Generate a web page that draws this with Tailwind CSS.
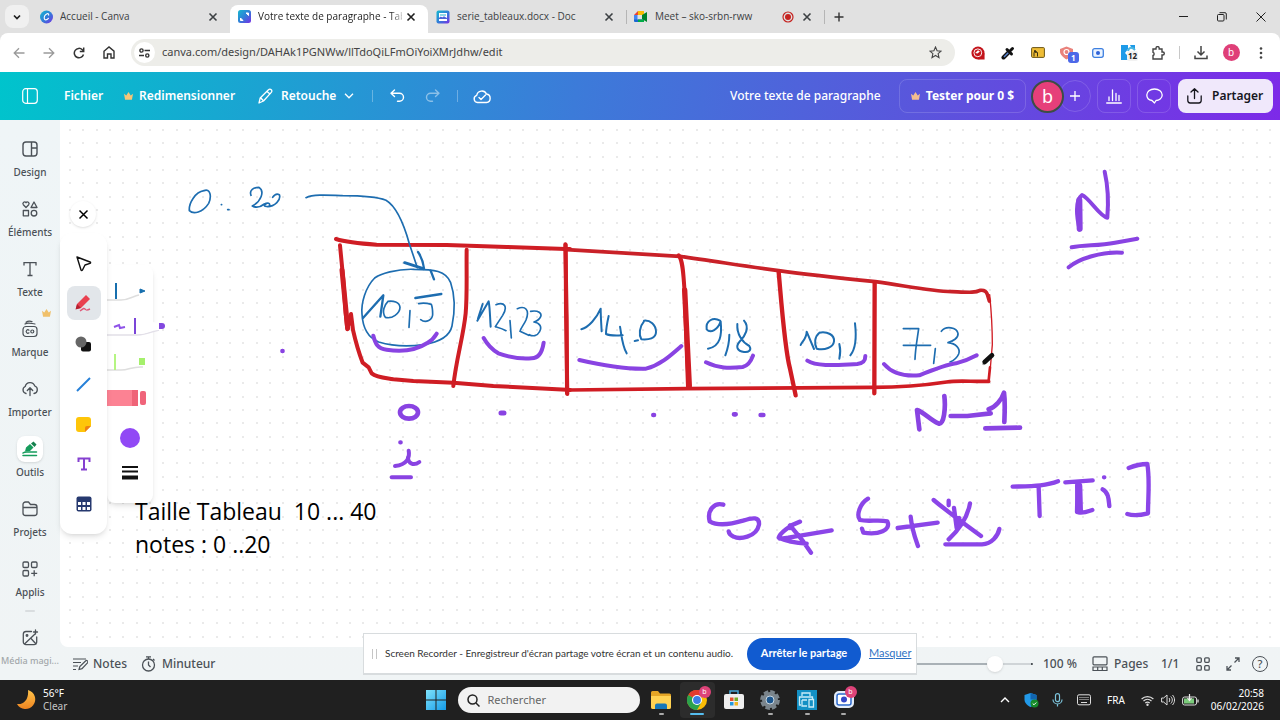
<!DOCTYPE html>
<html lang="fr">
<head>
<meta charset="utf-8">
<meta name="viewport" content="width=device-width, initial-scale=1">
<title>Votre texte de paragraphe - Tableau blanc</title>
<script src="https://cdn.jsdelivr.net/npm/@tailwindcss/browser@4"></script>
</head>
<body class="flex min-h-screen flex-col overflow-hidden bg-[#e1e1e1] font-['Noto_Sans',sans-serif] text-[#3c4043]">
<svg class="hidden" aria-hidden="true">
  <symbol id="x" viewBox="0 0 12 12"><path d="M2.500 2.500l7 7M9.500 2.500l-7 7" fill="none" stroke="currentColor" stroke-width="1.600"/></symbol>
  <symbol id="crown" viewBox="0 0 10 10"><path d="M0 2l2.500 2L5 0l2.500 4L10 2 8.800 8.500H1.200z" fill="currentColor"/></symbol>
</svg>

<!-- Tabs -->
<nav class="flex h-[33px] shrink-0 items-center pl-[5px] font-['Open_Sans',sans-serif] text-[10px]">
  <button aria-label="Rechercher dans les onglets" class="mr-[3px] flex h-[23px] w-6 items-center justify-center rounded-lg bg-[#f0f0f0] text-[#1f1f1f]"><svg width="8" height="8" viewBox="0 0 8 8"><path d="M1 2.500l3 3 3-3" fill="none" stroke="currentColor" stroke-width="1.700"/></svg></button>
  <div class="flex h-full w-[198px] items-center gap-[7px] px-2">
    <svg class="shrink-0" width="13" height="14" viewBox="0 0 13 14"><defs><linearGradient id="cv" x1="0" y1="0" x2="1" y2="1"><stop offset="0" stop-color="#16b9cf"/><stop offset=".5" stop-color="#2f7fd8"/><stop offset="1" stop-color="#7a2ee6"/></linearGradient></defs><circle cx="6.500" cy="7" r="6.500" fill="url(#cv)"/><path d="M8.700 5.200c.2-1.400-.9-1.900-2-1.300-1.700.9-2.700 3-2.400 4.700.3 1.700 2.300 1.900 4.100-.3" fill="none" stroke="#fff" stroke-width="1.100" stroke-linecap="round"/></svg>
    <span class="min-w-0 flex-1 truncate">Accueil - Canva</span>
    <button aria-label="Fermer" class="mr-[3px]"><svg width="12" height="12"><use href="#x"/></svg></button>
  </div>
  <div class="flex h-[28px] w-[198px] items-center gap-[7px] self-end rounded-t-lg bg-white px-2 pb-[5px] text-[#1f1f1f]">
    <svg class="shrink-0" width="13" height="13" viewBox="0 0 13 13"><rect width="13" height="13" rx="2.500" fill="url(#cv)"/><path d="M8 3h2.500v2.500zM5 10.500H2.500V8z" fill="#fff" stroke="#fff"/></svg>
    <span class="-mr-1 min-w-0 flex-1 whitespace-nowrap [mask-image:linear-gradient(to_right,#000_92%,#0004)]">Votre texte de paragraphe - Tab</span>
    <button aria-label="Fermer" class="mr-[3px]"><svg width="12" height="12"><use href="#x"/></svg></button>
  </div>
  <div class="flex h-full w-[198px] items-center gap-[7px] px-2">
    <svg class="shrink-0" width="14" height="14" viewBox="0 0 14 14"><rect x=".5" y=".5" width="13" height="13" rx="2" fill="url(#cv)"/><path d="M3 3h8v8H3z" fill="#fff"/><path d="M3 8c2-3 3 0 4-1s2 0 4 1v1H3z" fill="#4b62d9"/><path d="M4 5h6" stroke="#21b1d0"/></svg>
    <span class="min-w-0 flex-1 truncate">serie_tableaux.docx - Doc</span>
    <button aria-label="Fermer" class="mr-[3px]"><svg width="12" height="12"><use href="#x"/></svg></button>
  </div>
  <div class="relative flex h-full w-[198px] items-center gap-[7px] px-2 before:absolute before:left-0 before:h-[14px] before:w-px before:bg-[#b5b5b5]">
    <svg class="shrink-0" width="14" height="12" viewBox="0 0 14 12"><path d="M0 4l4-4v4z" fill="#ea4335"/><path d="M4 0h6v4H4z" fill="#fbbc04"/><path d="M0 4h3.500v5H0z" fill="#4285f4"/><path d="M0 8.500h10V11H1a1 1 0 01-1-1z" fill="#1967d2"/><path d="M4 8.500h6V11H4z" fill="#00ac47"/><path d="M8 4l5-3v10L8 8z" fill="#00832d"/></svg>
    <span class="min-w-0 flex-1 truncate">Meet – sko-srbn-rww</span>
    <svg class="shrink-0" width="12" height="12" viewBox="0 0 12 12"><circle cx="6" cy="6" r="5" fill="none" stroke="#c5221f" stroke-width="1.200"/><circle cx="6" cy="6" r="3" fill="#c5221f"/></svg>
    <button aria-label="Fermer" class="mr-[3px]"><svg width="12" height="12"><use href="#x"/></svg></button>
  </div>
  <span class="h-[14px] w-px bg-[#b5b5b5]"></span>
  <button aria-label="Nouvel onglet" class="ml-2"><svg width="12" height="12"><path d="M6 1.500v9M1.500 6h9" stroke="#333" stroke-width="1.400"/></svg></button>
  <div class="ml-auto flex text-[#222]">
    <button aria-label="Réduire" class="flex w-[38px] justify-center"><svg width="10" height="10"><path d="M0 4.500h9" stroke="currentColor"/></svg></button>
    <button aria-label="Restaurer" class="flex w-[38px] justify-center"><svg width="10" height="10" viewBox="0 0 10 10" fill="none" stroke="currentColor"><rect x=".5" y="2.500" width="6.500" height="6.500" rx="1"/><path d="M2.500.7H8A1.300 1.300 0 019.300 2v5.500"/></svg></button>
    <button aria-label="Fermer la fenêtre" class="flex w-[39px] justify-center"><svg width="10" height="10"><path d="M.5.5l9 9M9.500.5l-9 9" stroke="currentColor"/></svg></button>
  </div>
</nav>

<!-- Address bar -->
<div class="flex h-[39px] shrink-0 items-center rounded-t-lg bg-white px-1 text-[#333]">
  <button aria-label="Précédent" class="flex w-[30px] justify-center text-[#9a9a9a]"><svg width="12" height="12" fill="none" stroke="currentColor" stroke-width="1.300"><path d="M11.500 6h-10M6 1.200L1.200 6 6 10.800"/></svg></button>
  <button aria-label="Suivant" class="flex w-[30px] justify-center text-[#9a9a9a]"><svg width="12" height="12" fill="none" stroke="currentColor" stroke-width="1.300"><path d="M.5 6h10M6 1.200L10.800 6 6 10.800"/></svg></button>
  <button aria-label="Actualiser" class="flex w-[30px] justify-center"><svg width="12" height="12" fill="none" stroke="currentColor" stroke-width="1.500"><path d="M10.500 7.500A4.700 4.700 0 119.300 2.700L10.500 4"/><path d="M10.700.5v4H6.800"/></svg></button>
  <button aria-label="Accueil" class="flex w-[30px] justify-center"><svg width="12" height="13" fill="none" stroke="currentColor" stroke-width="1.400"><path d="M1 5.200L6 1l5 4.200V12H8V8H4.500v4H1z"/></svg></button>
  <div class="ml-[7px] mr-2 flex h-[27px] flex-1 items-center rounded-full bg-[#edede9] pl-[3px] pr-[13px]">
    <button aria-label="Informations sur le site" class="mr-[7px] flex size-[21px] items-center justify-center rounded-full bg-white"><svg width="11" height="10" fill="none" stroke="#333" stroke-width="1.400"><circle cx="2.500" cy="2.500" r="1.600"/><path d="M5.500 2.500H11M0 7.500h5"/><circle cx="8.300" cy="7.500" r="1.600"/></svg></button>
    <input aria-label="Adresse" class="min-w-0 flex-1 bg-transparent text-[11px] text-[#444] outline-none" value="canva.com/design/DAHAk1PGNWw/llTdoQiLFmOiYoiXMrJdhw/edit">
    <button aria-label="Favoris"><svg width="13" height="13" viewBox="0 0 13 13"><path d="M6.500 1l1.600 3.700 4 .4-3 2.600.9 3.900-3.500-2.100L3 11.600l.9-3.900-3-2.600 4-.4z" fill="none" stroke="#444" stroke-width="1.100"/></svg></button>
  </div>
  <button aria-label="Extension rouge" class="flex w-[30px] justify-center"><svg width="14" height="14" viewBox="0 0 15 15"><circle cx="7.500" cy="7.500" r="7" fill="#c3141b"/><path d="M7.500 14.500h7v-7z" fill="#c3141b"/><circle cx="7.300" cy="7.300" r="4.200" fill="none" stroke="#fff"/><path d="M4.500 7.500l3-3 2 1.500L7 8z" fill="#fff"/></svg></button>
  <button aria-label="Pipette" class="flex w-[30px] justify-center"><svg width="14" height="14" viewBox="0 0 14 14"><path d="M2.500 11.500l5.500-5.500" stroke="#111" stroke-width="4" stroke-linecap="round"/><path d="M3 11l5-5" stroke="#5a86d2" stroke-width="1.500"/><path d="M6 3.500l4.500 4.500M9 5l2.500-2.500" stroke="#111" stroke-width="3" stroke-linecap="round"/></svg></button>
  <button aria-label="Extension jaune" class="flex w-[30px] justify-center"><svg width="14" height="11" viewBox="0 0 14 11"><rect x=".6" y=".6" width="12.800" height="9.800" rx="1" fill="#efbd36" stroke="#6b5618"/><path d="M3 9.500V6l1-3 1 3V4.500l1.500 1V9.500" fill="none" stroke="#3b3010"/></svg></button>
  <button aria-label="Extension de blocage" class="relative flex w-[30px] justify-center"><svg class="-translate-x-[2px]" width="13" height="14" viewBox="0 0 13 14"><path d="M0 3l6.500-2.500L13 3v3c0 2-3 5.500-6.500 7.500C3 11.500 0 8 0 6z" fill="#e9827c"/><circle cx="6.500" cy="6" r="2.500" fill="#e9827c" stroke="#fff" stroke-width="1.200"/></svg><span class="absolute left-[15px] top-[6px] rounded-[3px] bg-[#4c68e8] px-[3px] text-[8px]/[11px] font-bold text-white">1</span></button>
  <button aria-label="Enregistreur" class="flex w-[30px] justify-center"><svg width="12" height="10" viewBox="0 0 12 10"><rect x=".7" y=".7" width="10.600" height="8.600" rx="2" fill="#eaf3ff" stroke="#3d7fe0" stroke-width="1.300"/><circle cx="6" cy="5" r="2" fill="#2f63d8"/></svg></button>
  <button aria-label="Extension bleue" class="relative flex w-[30px] justify-center"><svg width="15" height="15" viewBox="0 0 15 15"><path d="M0 0h7v4L4 8l3 3v4H0zM9 0h5v4h-3z" fill="#1d9ae8"/><path d="M7 6c1-4 4-4 7-1" fill="none" stroke="#4bb6e0" stroke-width="2"/></svg><span class="absolute left-[14px] top-[6px] rounded-[2px] bg-[#f2f2f2] px-px text-[8px]/[10px] font-bold text-[#222]">12</span></button>
  <button aria-label="Extensions" class="flex w-[30px] justify-center"><svg width="15" height="14" viewBox="0 0 15 14"><path d="M2 3h3V2.200a1.600 1.600 0 013.200 0V3H11v3h.8a1.500 1.500 0 010 3H11v4H2v-3.500a1.700 1.700 0 000-3.200z" fill="none" stroke="#444" stroke-width="1.400"/></svg></button>
  <span class="mx-[6px] h-[13px] w-px bg-[#c8c8c8]"></span>
  <button aria-label="Téléchargements" class="flex w-[30px] justify-center"><svg width="14" height="14" viewBox="0 0 14 14" fill="none" stroke="#444" stroke-width="1.500"><path d="M7 0v8.500M3.500 5.500L7 9l3.500-3.500M1 9.500v3h12v-3"/></svg></button>
  <button class="flex w-[30px] justify-center"><span class="flex size-[17px] items-center justify-center rounded-full bg-[#df3f78] text-[10px] text-white">b</span></button>
  <button aria-label="Menu" class="flex w-[30px] justify-center"><svg width="4" height="14" fill="#444"><circle cx="2" cy="2.500" r="1.300"/><circle cx="2" cy="7" r="1.300"/><circle cx="2" cy="11.500" r="1.300"/></svg></button>
</div>

<!-- Editor header -->
<header class="flex h-12 shrink-0 items-center bg-[linear-gradient(100deg,#00c4cc_0%,#3c7bd9_45%,#5a55dc_72%,#7d2ae8_100%)] pl-[22px] pr-[7px] text-[12px] font-semibold text-white">
  <button aria-label="Barre latérale" class="mr-[26px]"><svg width="16" height="16" viewBox="0 0 16 16" fill="none" stroke="currentColor" stroke-width="1.200"><rect x=".7" y=".7" width="14.600" height="14.600" rx="3"/><path d="M5.500 1v14"/></svg></button>
  <button class="w-[60px] text-left">Fichier</button>
  <button class="flex w-[134px] items-center gap-[6px] whitespace-nowrap"><svg class="text-[#f6c678]" width="9" height="9"><use href="#crown"/></svg>Redimensionner</button>
  <button class="flex w-[114px] items-center gap-2"><svg width="15" height="16" viewBox="0 0 15 16" fill="none" stroke="currentColor" stroke-width="1.300" stroke-linejoin="round"><path d="M1 15l1.200-5L10.500 1.700a1.900 1.900 0 012.800 0 1.900 1.900 0 010 2.700L5.500 13zM9 3.500L12 6M2.500 9.500l3 3.500"/></svg>Retouche<svg width="10" height="6"><path d="M1 .8L5 4.800 9 .8" fill="none" stroke="currentColor" stroke-width="1.300"/></svg></button>
  <span class="h-3 w-px bg-white/30"></span>
  <button aria-label="Annuler" class="ml-[17px]"><svg width="15" height="14" viewBox="0 0 15 14" fill="none" stroke="currentColor" stroke-width="1.400" stroke-linecap="round" stroke-linejoin="round"><path d="M4.500 1L1 4.200l3.500 3.300M1 4.200h8.500a4 4 0 010 8H7.500"/></svg></button>
  <button aria-label="Rétablir" class="ml-5 text-white/45"><svg width="15" height="14" viewBox="0 0 15 14" fill="none" stroke="currentColor" stroke-width="1.400" stroke-linecap="round" stroke-linejoin="round"><path d="M10.500 1L14 4.200l-3.500 3.300M14 4.200H5.500a4 4 0 000 8h2"/></svg></button>
  <span class="ml-[17px] h-3 w-px bg-white/30"></span>
  <button aria-label="Enregistré" class="ml-[15px]"><svg width="18" height="15" viewBox="0 0 18 15" fill="none" stroke="currentColor" stroke-width="1.400" stroke-linecap="round" stroke-linejoin="round"><path d="M4.500 13.500a3.700 3.700 0 01-.8-7.200A5.200 5.200 0 0113.500 5a4.300 4.300 0 010 8.500zM6 8.500l2 2L12.500 6"/></svg></button>
  <span class="ml-auto w-[148px] whitespace-nowrap font-medium">Votre texte de paragraphe</span>
  <button class="ml-[21px] flex h-[34px] w-[127px] items-center justify-center gap-[6px] whitespace-nowrap rounded-lg border border-white/15 font-bold"><svg class="text-[#f3bd90]" width="9" height="9"><use href="#crown"/></svg>Tester pour 0 $</button>
  <button class="z-10 ml-[5px] flex size-[33px] items-center justify-center rounded-full border-2 border-[#3c4d45] bg-[#e63f7a] text-[18px] font-normal">b</button>
  <button aria-label="Ajouter" class="-ml-[5px] flex size-8 items-center justify-center rounded-full border border-white/15"><svg width="10" height="10"><path d="M5 0v10M0 5h10" stroke="currentColor" stroke-width="1.300"/></svg></button>
  <button aria-label="Statistiques" class="ml-[6px] flex size-[34px] items-center justify-center rounded-lg border border-white/15"><svg width="16" height="15" viewBox="0 0 16 15" fill="none" stroke="currentColor" stroke-width="1.300" stroke-linecap="round"><path d="M.7 14h14.600M3 11.500V8M6.500 11.500V1M10 11.500V4.500M13 11.500V6.500"/></svg></button>
  <button aria-label="Commentaires" class="ml-[6px] flex size-[34px] items-center justify-center rounded-lg border border-white/15"><svg width="17" height="16" viewBox="0 0 17 16" fill="none" stroke="currentColor" stroke-width="1.300" stroke-linejoin="round"><path d="M6 12.500C3 12 .8 9.800.8 7c0-3.300 3.200-6 7.700-6s7.700 2.700 7.700 6-3.200 5.500-6.200 5.500L8.500 15z"/></svg></button>
  <button class="ml-[7px] flex h-[34px] w-[95px] items-center gap-[10px] rounded-lg bg-[#f0e8fb] pl-[9px] text-[#16161d]"><svg width="15" height="16" viewBox="0 0 15 16" fill="none" stroke="currentColor" stroke-width="1.300" stroke-linecap="round" stroke-linejoin="round"><path d="M7.500 10.500V1M4 4l3.500-3.300L11 4M.8 8v4.500A2.500 2.500 0 003.200 15h8.600a2.500 2.500 0 002.400-2.500V8"/></svg>Partager</button>
</header>

<div class="flex flex-1 bg-[linear-gradient(180deg,#eff5f7,#f0f4f5)]">
  <!-- Side navigation -->
  <aside class="flex w-[60px] shrink-0 flex-col items-center overflow-hidden text-[10px]/[14px] font-medium text-[#4b5157]">
    <button class="flex h-[60px] flex-col items-center gap-[6px] pt-[19px]"><svg width="20" height="20" viewBox="0 0 20 20" fill="none" stroke="currentColor" stroke-width="1.400"><rect x="3" y="3" width="14" height="14" rx="3"/><path d="M11.500 3v14M11.500 9H17"/></svg>Design</button>
    <button class="flex h-[60px] flex-col items-center gap-[6px] pt-[19px]"><svg width="20" height="20" viewBox="0 0 20 20" fill="none" stroke="currentColor" stroke-width="1.300" stroke-linejoin="round"><path d="M6 8.500L3.300 5.700a1.600 1.600 0 012.700-2 1.600 1.600 0 012.700 2zM14 3l3 5.500h-6zM3.300 11.500h5.200v5.300H3.300z"/><circle cx="14" cy="14.200" r="2.800"/></svg>Éléments</button>
    <button class="flex h-[60px] flex-col items-center gap-[6px] pt-[19px]"><svg width="20" height="20" viewBox="0 0 20 20" fill="none" stroke="currentColor" stroke-width="1.300"><path d="M4 6.500V3.700h12v2.800M10 4v12.500M7.500 16.500h5"/></svg>Texte</button>
    <button class="relative flex h-[60px] flex-col items-center gap-[6px] pt-[19px]"><svg class="absolute left-[31px] top-[9px] text-[#f0c06a]" width="9" height="9"><use href="#crown"/></svg><svg width="20" height="20" viewBox="0 0 20 20" fill="none" stroke="currentColor" stroke-width="1.200" stroke-linecap="round"><rect x="3" y="7.500" width="14" height="10" rx="3"/><path d="M5 5c3-2 6-.5 10 0M6 3.200c3-2 4-1 6-.5M9 11.200a1.700 1.700 0 100 2.600"/><circle cx="12.300" cy="12.500" r="1.500"/></svg>Marque</button>
    <button class="flex h-[60px] flex-col items-center gap-[6px] pt-[19px]"><svg width="20" height="20" viewBox="0 0 20 20" fill="none" stroke="currentColor" stroke-width="1.300" stroke-linecap="round" stroke-linejoin="round"><path d="M6 14.500a3.700 3.700 0 01-.8-7A5 5 0 0114.800 7 3.900 3.900 0 0114 14.500M10 16.500V9M7.300 11.500L10 8.800l2.700 2.700"/></svg>Importer</button>
    <button class="flex h-[60px] flex-col items-center pt-[16px]"><span class="mb-[3px] flex size-[26px] items-center justify-center rounded-lg bg-white shadow"><svg width="16" height="16" viewBox="0 0 16 16"><path d="M3 10.500l1-4 4-3.500 3.500 3.500-3.500 3.500z" fill="#169c5c"/><path d="M9 2.500l2.500-2 3 3-2 2.500z" fill="#14804d"/><path d="M1 12c2-1.500 4-.8 6-1h7.500M1 14.500h13.500" fill="none" stroke="#169c5c" stroke-width="1.500" stroke-linecap="round"/></svg></span>Outils</button>
    <button class="flex h-[60px] flex-col items-center gap-[6px] pt-[19px]"><svg width="20" height="20" viewBox="0 0 20 20" fill="none" stroke="currentColor" stroke-width="1.300" stroke-linejoin="round"><path d="M3 5.500A2.500 2.500 0 015.500 3h3l2 2.500h4A2.500 2.500 0 0117 8v6a2.500 2.500 0 01-2.500 2.500h-9A2.500 2.500 0 013 14zM3 8.500h14"/></svg>Projets</button>
    <button class="flex h-[60px] flex-col items-center gap-[6px] pt-[19px]"><svg width="20" height="20" viewBox="0 0 20 20" fill="none" stroke="currentColor" stroke-width="1.300"><rect x="3" y="3" width="5.500" height="5.500" rx="1.200"/><rect x="11.500" y="3" width="5.500" height="5.500" rx="1.200"/><rect x="3" y="11.500" width="5.500" height="5.500" rx="1.200"/><path d="M14.200 11.300v6M11.200 14.300h6"/></svg>Applis</button>
    <span class="mt-[10px] h-[2px] w-[10px] rounded bg-[#d9dddf]"></span>
    <button class="mt-4 flex flex-col items-center gap-[6px] whitespace-nowrap"><svg width="20" height="20" viewBox="0 0 20 20" fill="none" stroke="currentColor" stroke-width="1.300" stroke-linecap="round"><path d="M11.500 3.500H6A2.700 2.700 0 003.300 6v8A2.700 2.700 0 006 16.700h8a2.700 2.700 0 002.700-2.700V9M4.500 16L15 6M11.500 11l4.500 5M15.500 2v4M13.500 4h4"/><circle cx="7" cy="7.500" r=".8"/></svg><span class="text-[9px]/[14px] text-[#a3a8ab]">Média magi...</span></button>
  </aside>

  <main class="flex min-w-0 flex-1 flex-col">
    <!-- Whiteboard -->
    <section class="relative flex-1 rounded-bl-lg bg-white">
      <svg class="absolute inset-0 h-full w-full rounded-bl-lg"><defs><pattern id="dots" width="40" height="40" patternUnits="userSpaceOnUse"><g fill="#d0d0d0"><circle cx="10" cy="10" r=".8"/><circle cx="23" cy="10" r=".8"/><circle cx="37" cy="10" r=".8"/><circle cx="10" cy="23" r=".8"/><circle cx="23" cy="23" r=".8"/><circle cx="37" cy="23" r=".8"/><circle cx="10" cy="37" r=".8"/><circle cx="23" cy="37" r=".8"/><circle cx="37" cy="37" r=".8"/></g></pattern></defs><rect width="100%" height="100%" fill="url(#dots)"/></svg>
      <svg class="absolute left-0 top-0" width="1220" height="527" viewBox="60 120 1220 527" fill="none" stroke-linecap="round" stroke-linejoin="round" role="img" aria-label="Tableau de notes dessiné à la main">
        <g transform="translate(180 170) scale(.33333)">
          <g stroke="#cf1d24" stroke-width="12">
            <path d="M468 207C500 217 530 220 590 224L800 225 980 231 1158 237 1170 237" />
            <path d="M480 226L490 330 497 430 502 478 513 432 519 480C528 520 538 552 548 578L566 592 575 610C590 622 610 623 640 628L700 633 820 638 940 648 1160 659 1170 660"/>
            <path d="M486 300L503 474" stroke-width="15"/>
            <path d="M860 239C859 310 862 370 857 430 850 500 828 570 820 648M1156 223L1160 440 1161 670"/>
          </g>
          <g stroke="#1d6db0" stroke-width="5">
            <path d="M72 62C45 66 26 100 28 122c12 12 40 6 58-22 10-22 4-46-14-38M143 119h4M124 104h1M213 76c-6-16 8-24 24-24 18 12 6 42-20 56 14 8 26 2 36-6 16-8 20 4 12 8-18 0-12-6-4-10M262 110c22 0 42-20 36-36-8-4-16 2-20 8M378 83c20-10 60-8 110-6 60 0 100 2 130 14 34 20 56 80 70 130l24 72"/>
            <path d="M674 278l56 18" stroke-width="9"/><path d="M714 246c14 20 16 34 18 50M752 302l10 26" stroke-width="7"/>
            <path d="M702 298C650 296 600 312 584 324 556 352 543 400 546 432c2 40 16 70 50 84 40 12 90 14 134 8 50-8 80-28 86-56 8-40 10-90-4-130-14-36-50-40-110-40"/>
            <path d="M549 444L610 376 601 440" stroke-width="7"/><path d="M624 394c-10 10-20 32-8 48 20 6 44-12 44-30-2-16-20-20-36-18M690 422l-3 50"/>
            <path d="M706 384l78-12" stroke-width="7"/><path d="M716 401c12-3 24-2 38 2 4 10 4 22 4 30 0 16-20 28-36 16" stroke-width="5"/>
            <path d="M892 452L926 394c4 20 4 50 6 76M894 446l14-44" stroke-width="6"/><path d="M948 404c26-10 36 6 20 32l-22 34c14 4 22 6 32 12M990 452l4 52M1012 416c24-10 38 4 26 34-6 14-16 24-18 34l26 12M1052 424c24-4 34 6 30 16-4 10-14 14-20 16 16 2 26 14 16 30-6 12-20 14-30 8"/>
          </g>
          <g stroke="#8943e2" stroke-width="12">
            <path d="M580 497c6 24 12 38 40 42 50 8 94-2 122-20 14-8 22-18 28-28M911 504c10 18 24 34 44 46 34 12 70 18 100 15 20 0 32-20 36-47"/>
            <ellipse cx="687" cy="727" rx="27" ry="19" stroke-width="14"/><path d="M963 729h9" stroke-width="15"/><path d="M307 543h1M661 817h1" stroke-width="13"/><path d="M686 842c4 20-4 42-41 46M684 862c0 20 18 26 34 14M635 922h58"/>
          </g>
        </g>
        <g transform="translate(540 230) scale(.33333)">
          <g stroke="#d01c23" stroke-width="12">
            <path d="M80 59c110 6 220 12 340 20 100 14 200 30 296 43 100 14 200 24 290 33 90 12 160 28 230 30 50 2 70 4 84-4 16-2 20 6 22 12l6 20" stroke="#c92128" stroke-width="11"/>
            <path d="M1349 194c4 40 8 80 8 150M1357 344l-6 70" stroke-width="4"/><path d="M1350 412l-4 40" stroke-width="8"/>
            <path d="M90 480L440 476 1000 472C1080 472 1160 465 1220 456 1260 450 1300 456 1346 454" stroke-width="11"/>
            <path d="M77 44l1 200 4 248M416 76c14 16 14 64 18 110l10 284" stroke-width="12"/><path d="M434 180l14 288" stroke-width="16"/>
            <path d="M716 126c8 90 18 230 34 290l17 80M1004 158l-1 332" stroke-width="13"/>
          </g>
          <g stroke="#1d6db0" stroke-width="6">
            <path d="M124 298c22-6 46-34 58-62 0 20 2 50 3 68M206 258c-4 18-8 42-8 54 12 6 30 4 50 4M240 290c4 20 6 56 20 80M284 333l10-2M312 274c-14 16-16 40-8 54 22 2 44-2 44-22 0-22-18-36-36-34"/>
            <path d="M540 272c-20-12-44 0-40 26 12 14 34 0 42-24 4 40 0 76-38 82M568 314c0 24-4 40-12 62M592 282c-2 30 14 54 36 66 8 12-2 20-16 18-20-2-26-16-14-30 18-18 32-44 14-64"/>
            <path d="M782 345c4-10 18-20 18-40l22 52M838 308c-14 12-16 32-8 48 24 6 50-4 52-22 2-20-20-30-44-26M898 342c4 16 4 28 0 44M945 280c4 34 4 74-14 96"/>
            <path d="M1090 296h46c-4 30-10 60-11 92M1090 346h82M1186 356l-5 44M1204 304c14-18 46-12 50 6 2 14-16 24-30 28 24 2 38 18 32 34-6 14-16 20-26 24" stroke-width="5"/>
          </g>
          <g stroke="#8943e2" stroke-width="12">
            <path d="M118 390c60 14 130 28 200 26 44-12 74-40 106-68M498 397c36 18 70 18 110 14 18-4 26-20 31-34M802 392c30 20 100 12 150 10 16-2 24-8 24-24M1032 402c22 26 60 38 106 34 50-20 80-32 110-36 24-6 44-14 62-24"/><path d="M340 555h2M582 553h5M662 555h8" stroke-width="14"/>
            <path d="M1138 598l-7-58c20 6 40 30 64 40 18 8 22-50 18-82M1232 558h50l70-8M1346 538c20-6 40-30 46-50 4 30 2 60 1 88M1336 595l104-2" stroke-width="14"/>
          </g>
          <path d="M1330 402l27-28" stroke="#aaa" stroke-width="7"/><path d="M1334 396l22-20" stroke="#111" stroke-width="14"/>
        </g>
        <g transform="translate(680 440) scale(.33333)" stroke="#8b45e8" stroke-width="13">
          <path d="M130 194c-26-8-50 16-41 50 24 14 60 10 100-2 30-10 50-12 48 12-8 40-60 44-76 36-10-4-14-8-15-16M455 271l-130 22M360 245c-30 10-60 34-64 48 28 12 60 16 84 18M330 256l38 46 25 36M300 296c20 0 30-4 45-6"/>
          <path d="M564 176c-24 14-36 50-24 64 24 6 56-2 82 4 12 26-26 42-72 34l-4-12M653 264l120-16M692 230c4 40 12 60 22 88M761 180c40 34 90 70 142 108M806 182v14M822 204l8 60 8-30M870 190c-8 46-34 80-64 108M796 313h110c30-2 48-26 52-46"/>
          <path d="M998 140c60-2 100-2 136-16M1076 142l3 86M1156 127l82-6M1193 132l-2 84c16 6 34-2 46-6M1272 112h1M1268 148c18 10 18 30 20 50M1346 84c20-8 38-12 56-12 8 48 2 100 2 148-24 6-44 8-62 2"/><path d="M1196 138l2 74" stroke-width="22"/>
        </g>
        <g transform="translate(1000 150) scale(.33333)" stroke="#8943e2" stroke-width="12"><path d="M314 65c10 44 12 90 8 138-24-4-52-58-76-68-22 16-16 68-7 104"/><path d="M238 150l1 86" stroke-width="18"/><path d="M215 292c40-8 80-4 130-14l67-12M206 352c30-26 100-48 160-44"/></g>
      </svg>

      <p class="absolute left-[75px] top-[375px] whitespace-pre font-['Open_Sans',sans-serif] text-[23px]/[33px] text-black">Taille Tableau  10 ... 40
notes : 0 ..20</p>

      <button aria-label="Fermer les outils" class="absolute left-[10px] top-[81px] flex size-[26px] items-center justify-center rounded-full bg-white text-black shadow"><svg width="15" height="15" viewBox="0 0 12 12"><path d="M2.800 2.800l6.400 6.400M9.200 2.800L2.800 9.200" stroke="currentColor" stroke-width="1.200"/></svg></button>

      <div class="absolute left-[47px] top-[145px] flex h-[238px] w-[46px] flex-col items-start rounded-lg bg-white pt-[17px] shadow-md">
        <button aria-label="Stylo bleu"><svg width="46" height="24" viewBox="0 0 46 24"><path d="M0 18h14c8 0 12-4 18-5" fill="none" stroke="#dedede" stroke-width="1.500"/><path d="M9 1v16" stroke="#176fae" stroke-width="2"/><path d="M33 7l5 2-5 2z" fill="#176fae" stroke="#176fae"/></svg></button>
        <button aria-label="Marqueur violet" class="mt-[9px]"><svg class="overflow-visible" width="58" height="24" viewBox="0 0 58 24"><path d="M0 20h30c10 0 16-4 22-5" fill="none" stroke="#e2dfe8" stroke-width="1.500"/><path d="M0 3h28c10 0 12 4 24 5v7c-9 0-10 3-18 4H0z" fill="#fff"/><path d="M28 3v16" stroke="#7b45d8" stroke-width="2"/><path d="M7 12l5-2 1 3 5-1" fill="none" stroke="#8e52e8" stroke-width="2"/><path d="M52 8h3a3 3 0 010 6h-3z" fill="#8248df"/></svg></button>
        <button aria-label="Surligneur vert" class="mt-[10px]"><svg width="46" height="24" viewBox="0 0 46 24"><path d="M0 21h14c8 0 12-4 22-3" fill="none" stroke="#dedede" stroke-width="1.500"/><path d="M8 5v16" stroke="#b5f582" stroke-width="2"/><path d="M32 9h6v7h-6z" fill="#a5f06c"/></svg></button>
        <button aria-label="Gomme" class="mt-[16px]"><svg width="46" height="18" viewBox="0 0 46 18"><path d="M0 1h30v16H0z" fill="#fc8293"/><path d="M25 1h6v16h-6z" fill="#ef6478"/><rect x="33" y="2" width="6" height="14" rx="2" fill="#f0647a"/></svg></button>
        <button aria-label="Couleur" class="ml-[13px] mt-[21px] size-5 rounded-full bg-[#9149f5]"></button>
        <button aria-label="Épaisseur" class="ml-[15px] mt-[18px]"><svg width="16" height="14"><path d="M0 1h16M0 5.500h16" stroke="#111" stroke-width="1.800"/><path d="M0 11.500h16" stroke="#111" stroke-width="4"/></svg></button>
      </div>

      <div class="absolute left-0 top-[113px] flex h-[301px] w-[47px] flex-col items-center rounded-xl bg-white pt-[14px] shadow-md">
        <button aria-label="Sélection" class="flex h-8 w-[34px] items-center justify-center"><svg width="17" height="17" viewBox="0 0 17 17"><path d="M2 2l13 5c.8.400.8 1 0 1.400L10 10l-2.500 5c-.500.800-1.200.7-1.500 0z" fill="none" stroke="#111" stroke-width="1.400" stroke-linejoin="round"/></svg></button>
        <button aria-label="Dessiner" class="mb-[4px] mt-[7px] flex size-[34px] items-center justify-center rounded-lg bg-[#e2e6ea]"><svg width="17" height="18" viewBox="0 0 17 18"><path d="M2 10l9-9 4 4-9 9-5 1z" fill="#e94150"/><path d="M2 10l4 4-5.500 1.500z" fill="#b51f30"/><path d="M5 17c4-3 4-3 5-2s1 2 5 0" fill="none" stroke="#e05878" stroke-width="1.400"/></svg></button>
        <button aria-label="Formes" class="flex size-10 items-center justify-center"><svg width="17" height="17" viewBox="0 0 17 17"><rect x="6" y="6" width="10" height="9.500" rx="2" fill="#111"/><circle cx="6" cy="6" r="5.500" fill="#666"/></svg></button>
        <button aria-label="Ligne" class="flex size-10 items-center justify-center"><svg width="17" height="17"><path d="M2 15L15 2" stroke="#2680d8" stroke-width="2"/></svg></button>
        <button aria-label="Note adhésive" class="flex size-10 items-center justify-center"><svg width="15" height="15"><path d="M3 0h9a3 3 0 013 3v6l-6 6H3a3 3 0 01-3-3V3a3 3 0 013-3z" fill="#fec509"/><path d="M15 9l-6 6v-4a2 2 0 012-2z" fill="#ef7f12"/></svg></button>
        <button aria-label="Texte" class="flex size-10 items-center justify-center"><svg width="14" height="14" fill="none" stroke="#8540d0" stroke-width="2"><path d="M1.500 5V1.500h11V5M7 1.500V13M4 12.500h6"/></svg></button>
        <button aria-label="Tableau" class="flex size-10 items-center justify-center"><svg width="16" height="16" viewBox="0 0 16 16"><rect x=".5" y=".5" width="15" height="15" rx="2" fill="#26396f"/><path d="M2 6h3v3H2zM6.500 6h3v3h-3zM11 6h3v3h-3zM2 11h3v3H2zM6.500 11h3v3h-3zM11 11h3v3h-3z" fill="#fff"/></svg></button>
      </div>
    </section>

    <!-- Editor footer -->
    <footer class="flex h-[33px] shrink-0 items-center pl-[13px] pr-3 text-[12px] font-medium text-[#4b5157]">
      <button class="flex w-[68px] items-center gap-[5px]"><svg width="15" height="14" viewBox="0 0 15 14" fill="none" stroke="currentColor" stroke-width="1.200"><path d="M0 2h13M0 5.500h8M0 9h5M0 12.500h3M6 12.500l.8-3L12.500 4a1.300 1.300 0 012 1.800L9 11.700z"/></svg>Notes</button>
      <button class="flex items-center gap-[6px]"><svg width="15" height="16" viewBox="0 0 15 16" fill="none" stroke="currentColor" stroke-width="1.300"><circle cx="7.500" cy="9" r="6"/><path d="M5 .8h5M7.500 1v2M12 3l1.500 1.500M7.500 5.500V9l2 2"/></svg>Minuteur</button>
      <input type="range" aria-label="Zoom" value="82" class="ml-auto h-[2px] w-[180px] appearance-none rounded bg-[linear-gradient(to_right,#a9b1b6_80%,#cfd4d7_80%,#cfd4d7_99%,#4b5157_99%)] [&::-webkit-slider-thumb]:size-4 [&::-webkit-slider-thumb]:appearance-none [&::-webkit-slider-thumb]:rounded-full [&::-webkit-slider-thumb]:bg-white [&::-webkit-slider-thumb]:shadow">
      <button class="ml-[10px] w-[49px] whitespace-nowrap text-left">100 %</button>
      <button class="flex w-[69px] items-center gap-[6px]"><svg width="16" height="15" viewBox="0 0 16 15" fill="none" stroke="currentColor" stroke-width="1.200"><rect x="1" y=".8" width="14" height="8" rx="1"/><path d="M1 11h14v3.500H1zM5.700 11v3.500M10.300 11v3.500"/></svg>Pages</button>
      <span class="w-[35px]">1/1</span>
      <button aria-label="Grille" class="mr-4"><svg width="14" height="14" fill="none" stroke="currentColor" stroke-width="1.300"><rect x=".8" y=".8" width="4.500" height="4.500" rx="1"/><rect x="8.700" y=".8" width="4.500" height="4.500" rx="1"/><rect x=".8" y="8.700" width="4.500" height="4.500" rx="1"/><rect x="8.700" y="8.700" width="4.500" height="4.500" rx="1"/></svg></button>
      <button aria-label="Plein écran" class="mr-3"><svg width="14" height="14" fill="none" stroke="currentColor" stroke-width="1.300"><path d="M9 1h4v4M13 1L8.500 5.500M5 13H1V9M1 13l4.500-4.500"/></svg></button>
      <button aria-label="Aide" class="flex size-4 items-center justify-center rounded-full border border-[#4b5157] text-[11px]/[11px]">?</button>
    </footer>
  </main>
</div>

<!-- Screen sharing notice -->
<div class="absolute left-1/2 top-[633px] flex h-[42px] w-[554px] -translate-x-1/2 items-center border border-b-2 border-[#d8dcde] bg-white pl-2 font-['Lato',sans-serif] text-[11px]">
  <span class="mr-2 h-[10px] w-[5px] shrink-0 border-x border-[#c5c5c5]"></span>
  <span class="w-[362px] shrink-0 whitespace-nowrap text-[10px] text-[#333]">Screen Recorder - Enregistreur d'écran partage votre écran et un contenu audio.</span>
  <button class="h-[32px] w-[114px] shrink-0 whitespace-nowrap rounded-full bg-[#115bd0] font-bold text-white">Arrêter le partage</button>
  <a href="#" class="ml-2 text-[#2f72c4] underline">Masquer</a>
</div>

<!-- Taskbar -->
<div class="flex h-10 shrink-0 items-center bg-[#202020] text-[11px] text-white">
  <div class="flex flex-1 items-center gap-[7px] pl-[17px]">
    <svg width="19" height="20" viewBox="0 0 19 20"><defs><linearGradient id="moon" x1="0" y1="0" x2="0" y2="1"><stop stop-color="#ffc34a"/><stop offset="1" stop-color="#ee8420"/></linearGradient></defs><path d="M11 0a9.700 9.700 0 11-11 14C7 15 12 9 11 0z" fill="url(#moon)"/></svg>
    <div class="text-[10px]/[13px]">56°F<br><span class="text-[#c5c5c5]">Clear</span></div>
  </div>
  <div class="flex items-center pl-[6px]">
    <button aria-label="Démarrer" class="mr-3"><svg width="20" height="20"><defs><linearGradient id="win" x1="0" y1="0" x2="1" y2="1"><stop stop-color="#7fe2fb"/><stop offset="1" stop-color="#149be8"/></linearGradient></defs><path d="M0 0h9.500v9.500H0zM10.500 0H20v9.500h-9.500zM0 10.500h9.500V20H0zM10.500 10.500H20V20h-9.500z" fill="url(#win)"/></svg></button>
    <label class="mr-1 flex h-[26px] w-[182px] items-center gap-2 rounded-full bg-[#f2f2f2] pl-[9px]"><svg width="13" height="13" fill="none" stroke="#222" stroke-width="1.500"><circle cx="5.500" cy="5.500" r="4.500"/><path d="M9 9l3.500 3.500"/></svg><input aria-label="Rechercher" placeholder="Rechercher" class="w-32 bg-transparent text-[11px] outline-none placeholder:text-[#666]"></label>
    <button aria-label="Explorateur" class="relative flex h-9 w-[35px] items-center justify-center"><svg width="20" height="18" viewBox="0 0 20 18"><path d="M0 1.500A1.500 1.500 0 011.500 0H7l2 2.500h9.500A1.500 1.500 0 0120 4v12a2 2 0 01-2 2H2a2 2 0 01-2-2z" fill="#e4a526"/><path d="M0 5h20v11a2 2 0 01-2 2H2a2 2 0 01-2-2z" fill="#ffd253"/><path d="M4 18v-3.500A2 2 0 016 12.500h8a2 2 0 012 2V18z" fill="#1677b8"/></svg><span class="absolute bottom-[3px] h-[2px] w-[5px] rounded bg-[#aaa]"></span></button>
    <button aria-label="Chrome" class="relative mx-px flex h-9 w-[35px] items-center justify-center rounded bg-[#2c2c2c]"><svg width="20" height="20" viewBox="0 0 20 20"><circle cx="10" cy="10" r="10" fill="#fbbc05"/><path d="M10 10L1.300 5a10 10 0 0117.400 0z" fill="#e33b2e"/><path d="M10 10L1.300 5a10 10 0 008.700 15l4.300-7.500z" fill="#2ba24c"/><circle cx="10" cy="10" r="5" fill="#fff"/><circle cx="10" cy="10" r="3.900" fill="#3c7de6"/></svg><span class="absolute right-[4px] top-[4px] flex size-3 items-center justify-center rounded-full bg-[#dd4379] text-[7px]">b</span><span class="absolute bottom-[3px] h-[2px] w-[14px] rounded bg-[#55bdf0]"></span></button>
    <button aria-label="Store" class="flex h-9 w-[36px] items-center justify-center"><svg width="20" height="20" viewBox="0 0 20 20"><path d="M6 5V1h8v4" fill="none" stroke="#46a6d6" stroke-width="1.500"/><rect y="4" width="20" height="15" rx="2" fill="#eee"/><path d="M6 7.500h3.500V11H6z" fill="#e5502d"/><path d="M10.500 7.500H14V11h-3.500z" fill="#72ac27"/><path d="M6 12h3.500v3.500H6z" fill="#2299dd"/><path d="M10.500 12H14v3.500h-3.500z" fill="#f2b420"/></svg></button>
    <button aria-label="Paramètres" class="relative flex h-9 w-[37px] items-center justify-center"><svg width="20" height="20" viewBox="0 0 20 20"><circle cx="10" cy="10" r="8.300" fill="none" stroke="#7b858c" stroke-width="3.200" stroke-dasharray="4.520 2"/><circle cx="10" cy="10" r="6" fill="#d9e3eb" stroke="#7b858c" stroke-width="4"/><circle cx="10" cy="10" r="4" fill="#1c568e" stroke="#c5d4df"/></svg><span class="absolute bottom-[3px] h-[2px] w-[5px] rounded bg-[#aaa]"></span></button>
    <button aria-label="Imprimante" class="relative flex h-9 w-[37px] items-center justify-center"><svg width="20" height="20" viewBox="0 0 20 20"><path d="M0 0h20v20H0z" fill="#1390c4"/><path d="M5 6V3h8v3M4 15H2.500V7h13v2M5 10h5M5 10v6h5M12 9.500h4.500v7.500H12z" fill="none" stroke="#c9ecf8" stroke-width="1.300"/></svg><span class="absolute bottom-[3px] h-[2px] w-[5px] rounded bg-[#aaa]"></span></button>
    <button aria-label="Screen Recorder" class="relative flex h-9 w-[36px] items-center justify-center"><svg width="20" height="18" viewBox="0 0 20 18"><rect x="1" y="1" width="18" height="15" rx="4" fill="#fff" stroke="#e4edf9" stroke-width="2"/><rect x="3" y="3" width="14" height="11" rx="2" fill="none" stroke="#2867cc" stroke-width="1.500"/><circle cx="10" cy="8.500" r="3" fill="#3548c9"/></svg><span class="absolute right-[5px] top-[4px] flex size-3 items-center justify-center rounded-full bg-[#dd4379] text-[7px]">b</span><span class="absolute bottom-[3px] h-[2px] w-[5px] rounded bg-[#aaa]"></span></button>
  </div>
  <div class="flex flex-1 items-center justify-end pr-4">
    <button aria-label="Icônes cachées" class="mr-[14px]"><svg width="10" height="6"><path d="M1 5l4-4 4 4" fill="none" stroke="#fff" stroke-width="1.400"/></svg></button>
    <button aria-label="Sécurité" class="mr-[13px]"><svg width="15" height="15" viewBox="0 0 15 15"><path d="M6.500 0l6 2v4.500c0 3.500-3 6-6 7.500-3-1.500-6-4-6-7.500V2z" fill="#2299e8"/><path d="M6.500 0l6 2v4.500h-6z" fill="#1165b0"/><circle cx="10.500" cy="10.500" r="4" fill="#168a2a"/><path d="M8.700 10.500l1.300 1.300 2.300-2.300" fill="none" stroke="#fff"/></svg></button>
    <button aria-label="Micro" class="mr-[14px]"><svg width="11" height="14" viewBox="0 0 11 14" fill="none" stroke="#7cc4dc" stroke-width="1.200"><rect x="3.500" y=".7" width="4" height="8" rx="2"/><path d="M1 6.500a4.500 4.500 0 009 0M5.500 11v2.500"/></svg></button>
    <button aria-label="Clavier" class="mr-4"><svg width="14" height="12" viewBox="0 0 14 12" fill="none" stroke="#ddd"><rect x=".5" y=".8" width="13" height="10" rx="1.500"/><path d="M2.500 3.500h9M2.500 5.500h9" stroke-dasharray="1 1"/><path d="M4 8.500h6"/></svg></button>
    <button class="mr-4 text-[10px]">FRA</button>
    <button aria-label="Réseau, son et batterie" class="mr-3 flex items-center gap-[7px]"><svg width="13" height="11" viewBox="0 0 13 11" fill="none" stroke="#ddd" stroke-width="1.200"><path d="M.6 4a8.500 8.500 0 0111.800 0M2.500 6a6 6 0 018 0M4.300 8a3.500 3.500 0 014.400 0"/><circle cx="6.500" cy="9.800" r=".6"/></svg><svg width="14" height="12" viewBox="0 0 14 12" fill="none" stroke="#ddd"><path d="M.6 4v4h2L6 11V1L2.600 4zM8 4c1 1.200 1 2.800 0 4M9.800 2.500c2 2 2 5 0 7M11.500 1c2.700 3 2.700 7 0 10"/></svg><svg width="17" height="12" viewBox="0 0 17 12"><rect x=".6" y="3" width="14" height="8" rx="2" fill="none" stroke="#ddd"/><path d="M2 4.500h10v5H2z" fill="#7bcb7b"/><path d="M16 5.500v3M7.500 0v6M5.500 4l2 2.500 2-2.500" fill="none" stroke="#eee" stroke-width="1.200"/></svg></button>
    <div class="text-right text-[10px]/[13px]">20:58<br>06/02/2026</div>
  </div>
</div>
</body>
</html>
